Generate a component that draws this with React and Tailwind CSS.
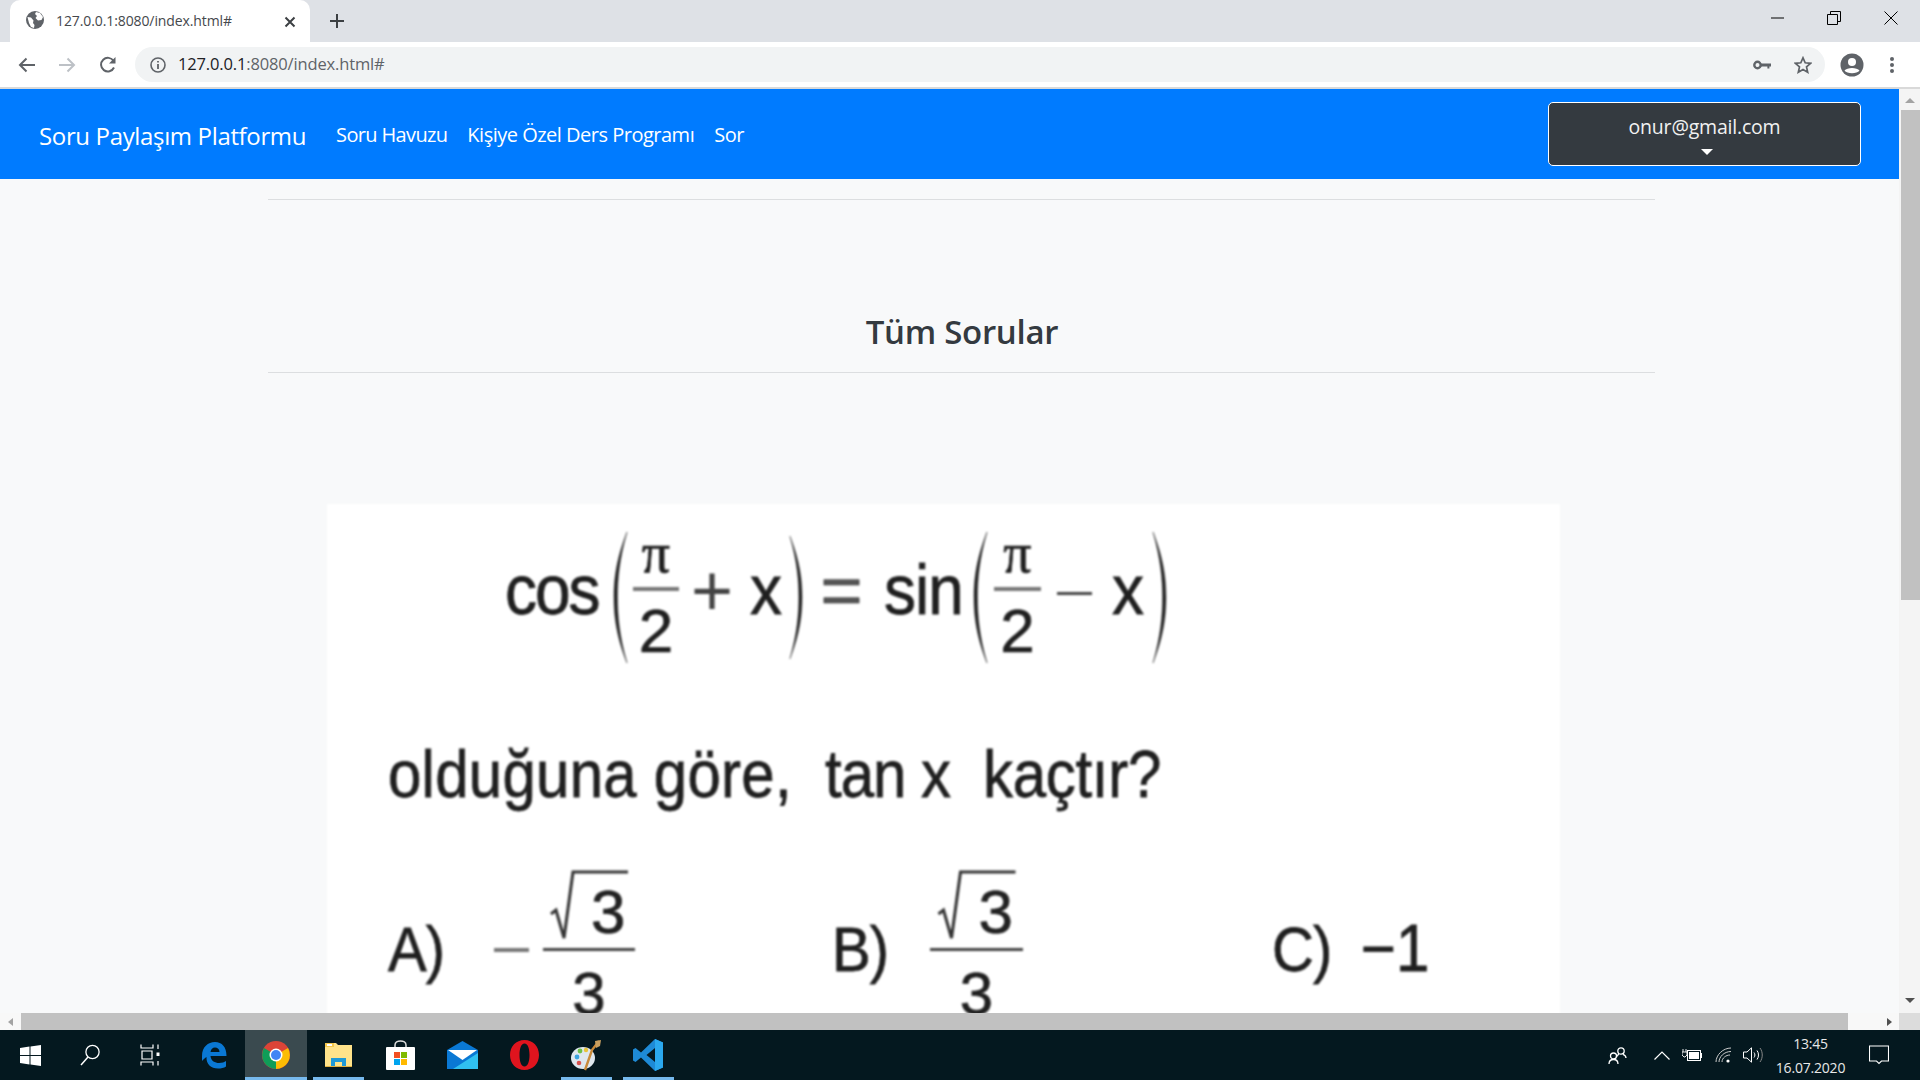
import React from "react";

const ui = { fontFamily: '"Open Sans","Noto Sans",sans-serif' };
const math = { fontFamily: '"Liberation Sans",Arial,sans-serif' };

function Globe() {
  return (
    <svg width="18" height="18" viewBox="0 0 18 18">
      <circle cx="9" cy="9" r="9" fill="#5f6368" />
      <path d="M1.5 6 L5 6.5 L7.5 9.5 L7 12 L8.5 14 L8 17 L5 16 L3 12 Z M10 1 L9 3 L11 5 L9.5 7 L12 9.5 L15.5 9 L17 6 L14 2 Z" fill="#fff" />
    </svg>
  );
}

function Paren({ w, flip }) {
  return (
    <svg width={w} height="135" viewBox="0 0 16 135" className={flip ? "shrink-0 -scale-x-100" : "shrink-0"}>
      <path d="M14 2 C3 30 1 50 1 67 C1 85 3 105 14 133 C6 105 4.5 85 4.5 67 C4.5 50 6 30 14 2 Z" fill="#222" stroke="#222" strokeWidth="0.4" />
    </svg>
  );
}

function Frac({ w }) {
  return (
    <div className="flex flex-col items-center shrink-0">
      <span className="text-[56px] leading-[50px] h-[50px] -mt-[2px]" style={{ fontFamily: '"Liberation Serif",serif' }}>π</span>
      <div className="h-[4px] bg-[#777] mt-[9px]" style={{ width: w }} />
      <span className="text-[62px] leading-[62px] h-[62px] mt-[9px]">2</span>
    </div>
  );
}

function SqrtFrac({ w, numLeft }) {
  return (
    <div className="flex flex-col shrink-0" style={{ width: w }}>
      <svg width={w} height="82" viewBox="0 0 92 82" className="shrink-0 overflow-visible">
        <path d="M8 48 L13 44 L21 72 L30 6 L85 6" fill="none" stroke="#333" strokeWidth="3" />
        <text x={numLeft} y="67" fontSize="62" fill="#222" fontFamily="Liberation Sans" stroke="#222" strokeWidth="0.7">3</text>
      </svg>
      <div className="h-[3px] w-full bg-[#444]" />
      <div className="flex justify-center text-[60px] leading-[60px] mt-[13px]">3</div>
    </div>
  );
}

function QuestionImage() {
  return (
    <div className="ml-[59px] mt-[131px] w-[1233px] h-[720px] bg-white text-[#1f1f1f] blur-[0.8px] shrink-0 [-webkit-text-stroke:0.7px_#222]" style={math}>
      <div className="flex items-start pt-[26px] pl-[178px] h-[161px]">
        <span className="w-[108px] text-[64px] leading-[121px] tracking-[-2px] scale-y-110">cos</span>
        <Paren w={16} />
        <div className="ml-[4px]"><Frac w={46} /></div>
        <span className="ml-[11px] w-[44px] text-center text-[72px] leading-[120px] text-[#444] [-webkit-text-stroke:0px]">+</span>
        <span className="ml-[16px] w-[29px] text-center text-[64px] leading-[121px] scale-y-110">x</span>
        <div className="ml-[9px]"><Paren w={15} flip /></div>
        <span className="ml-[17px] w-[43px] text-center text-[72px] leading-[120px] text-[#555]">=</span>
        <span className="ml-[21px] w-[75px] text-[64px] leading-[121px] tracking-[-1px] scale-y-110">sin</span>
        <div className="ml-[13px]"><Paren w={18} /></div>
        <div className="ml-[4px]"><Frac w={47} /></div>
        <div className="ml-[16px] w-[35px] h-[3px] bg-[#444] mt-[62px]" />
        <span className="ml-[20px] w-[29px] text-center text-[64px] leading-[121px] scale-y-110">x</span>
        <div className="ml-[9px]"><Paren w={18} flip /></div>
      </div>
      <div className="flex items-start mt-[75px] pl-[61px] h-[70px] text-[60px] leading-[70px] whitespace-pre">
        <span className="w-[437px] tracking-[0.25px] scale-y-110 origin-left">olduğuna göre,</span>
        <span className="w-[158px] tracking-[-1px] scale-y-110 origin-left">tan x</span>
        <span className="tracking-[-0.3px] scale-y-110 origin-left">kaçtır?</span>
      </div>
      <div className="flex items-start mt-[56px] pl-[61px] text-[58px]">
        <span className="w-[106px] leading-[110px] mt-[28px] tracking-[-1px] scale-y-110 origin-left">A)</span>
        <div className="w-[35px] h-[4px] bg-[#777] mt-[82px] shrink-0" />
        <div className="ml-[14px]"><SqrtFrac w={92} numLeft={48} /></div>
        <span className="ml-[197px] w-[98px] leading-[110px] mt-[28px] shrink-0 tracking-[-1px] scale-y-110 origin-left">B)</span>
        <SqrtFrac w={93} numLeft={48} />
        <span className="ml-[249px] w-[89px] leading-[110px] mt-[28px] shrink-0 tracking-[-1px] scale-y-110 origin-left">C)</span>
        <span className="leading-[110px] mt-[28px] text-[60px] scale-y-110">−1</span>
      </div>
    </div>
  );
}

function TabStrip() {
  return (
    <div className="h-[42px] bg-[#dee1e6] flex items-end shrink-0 relative">
      <div className="ml-[10px] w-[300px] h-[42px] bg-white rounded-t-[10px] flex items-center pl-[16px] pb-[2px] relative">
        <Globe />
        <span className="ml-[12px] text-[14px] text-[#45484c] tracking-[-0.1px]" style={ui}>127.0.0.1:8080/index.html#</span>
        <svg width="12" height="12" viewBox="0 0 12 12" className="absolute left-[274px] top-[16px]">
          <path d="M1.5 1.5 L10.5 10.5 M10.5 1.5 L1.5 10.5" stroke="#3c4043" strokeWidth="2" />
        </svg>
      </div>
      <svg width="16" height="16" viewBox="0 0 16 16" className="ml-[19px] mb-[13px]">
        <path d="M8 1 V15 M1 8 H15" stroke="#3c4043" strokeWidth="2" />
      </svg>
      <div className="ml-auto flex items-start h-full pt-[11px] pr-[22px]">
        <svg width="14" height="14" viewBox="0 0 14 14"><path d="M0 7 H13" stroke="#000" strokeWidth="1" /></svg>
        <svg width="14" height="14" viewBox="0 0 14 14" className="ml-[42px]"><path d="M.5 3.5 H10.5 V13.5 H.5 Z M3.5 3.5 V.5 H13.5 V10.5 H10.5" fill="none" stroke="#000" strokeWidth="1" /></svg>
        <svg width="14" height="14" viewBox="0 0 14 14" className="ml-[43px]"><path d="M.5 .5 L13.5 13.5 M13.5 .5 L.5 13.5" stroke="#000" strokeWidth="1" /></svg>
      </div>
    </div>
  );
}

function Toolbar() {
  return (
    <div className="h-[47px] bg-white border-b-2 border-[#d9d9d9] flex items-center shrink-0">
      <svg width="18" height="16" viewBox="0 0 18 16" className="ml-[18px]"><path d="M17 8 H2 M8.5 1.5 L2 8 L8.5 14.5" fill="none" stroke="#5f6368" strokeWidth="2" /></svg>
      <svg width="18" height="16" viewBox="0 0 18 16" className="ml-[22px]"><path d="M1 8 H16 M9.5 1.5 L16 8 L9.5 14.5" fill="none" stroke="#bdc1c6" strokeWidth="2" /></svg>
      <svg width="18" height="18" viewBox="0 0 18 18" className="ml-[23px]"><path d="M15 11.5 A6.8 6.8 0 1 1 14.6 5" fill="none" stroke="#5f6368" strokeWidth="2" /><path d="M16.5 1 V7.5 H10 Z" fill="#5f6368" /></svg>
      <div className="ml-[18px] w-[1690px] h-[35px] rounded-full bg-[#f1f3f4] flex items-center pl-[15px]">
        <svg width="16" height="16" viewBox="0 0 16 16"><circle cx="8" cy="8" r="7" fill="none" stroke="#5f6368" strokeWidth="1.6" /><path d="M8 7 V12 M8 4 V5.6" stroke="#5f6368" strokeWidth="1.8" /></svg>
        <span className="ml-[12px] text-[16.5px] tracking-[-0.15px] text-[#5f6368]" style={ui}><span className="text-[#202124]">127.0.0.1</span>:8080/index.html#</span>
        <svg width="18" height="10" viewBox="0 0 18 10" className="ml-auto"><circle cx="4.5" cy="5" r="3.2" fill="none" stroke="#5f6368" strokeWidth="2.4" /><path d="M8 3.6 H18 V6.4 H16.4 V8.6 H14.4 V6.4 H8 Z" fill="#5f6368" /></svg>
        <svg width="18" height="18" viewBox="0 0 18 18" className="ml-[23px] mr-[13px]"><path d="M9 1.8 L11.2 6.8 L16.6 7.3 L12.5 10.9 L13.7 16.2 L9 13.4 L4.3 16.2 L5.5 10.9 L1.4 7.3 L6.8 6.8 Z" fill="none" stroke="#5f6368" strokeWidth="1.7" /></svg>
      </div>
      <svg width="24" height="24" viewBox="0 0 24 24" className="ml-[15px]"><circle cx="12" cy="12" r="11.5" fill="#5f6368" /><circle cx="12" cy="9" r="4" fill="#fff" /><path d="M4.5 17.5 C7 14 17 14 19.5 17.5 C17 21 7 21 4.5 17.5 Z" fill="#fff" /></svg>
      <svg width="6" height="18" viewBox="0 0 6 18" className="ml-[25px]"><circle cx="3" cy="3" r="2" fill="#5f6368" /><circle cx="3" cy="9" r="2" fill="#5f6368" /><circle cx="3" cy="15" r="2" fill="#5f6368" /></svg>
    </div>
  );
}

function Navbar() {
  return (
    <div className="h-[90px] bg-[#007bff] flex items-center shrink-0 text-white pr-[38px]" style={ui}>
      <span className="ml-[39px] text-[24px] tracking-[-0.35px] mt-[3px] whitespace-nowrap">Soru Paylaşım Platformu</span>
      <span className="ml-[30px] mt-[2px] text-[20px] tracking-[-0.65px] whitespace-nowrap">Soru Havuzu</span>
      <span className="ml-[20px] mt-[2px] text-[20px] tracking-[-0.5px] whitespace-nowrap">Kişiye Özel Ders Programı</span>
      <span className="ml-[20px] mt-[2px] text-[20px] tracking-[-0.5px]">Sor</span>
      <div className="ml-auto w-[313px] h-[64px] bg-[#343a40] border border-white rounded-[5px] flex flex-col items-center pt-[10px] text-[#f1f1f1]">
        <span className="text-[19.5px] leading-[28px] tracking-[-0.2px]">onur@gmail.com</span>
        <div className="mt-[8px] ml-[4px] w-0 h-0 border-x-[6px] border-x-transparent border-t-[6px] border-t-white" />
      </div>
    </div>
  );
}

function Page() {
  return (
    <div className="flex-1 min-h-0 overflow-hidden bg-[#f8f9fa] flex flex-col">
      <div className="mt-[20px] ml-[268px] w-[1387px] flex flex-col shrink-0">
        <div className="h-[1px] bg-[#dcdee0]" />
        <div className="h-[172px] pt-[112px] pl-[1px] text-center text-[33px] leading-[40px] font-semibold text-[#343a40] tracking-[-0.3px]" style={ui}>Tüm Sorular</div>
        <div className="h-[1px] bg-[#dcdee0]" />
        <QuestionImage />
      </div>
    </div>
  );
}

function HScroll() {
  return (
    <div className="h-[17px] bg-[#f8f8f8] flex items-center shrink-0">
      <div className="w-[21px] flex justify-center"><div className="w-0 h-0 border-y-[4px] border-y-transparent border-r-[5px] border-r-[#a3a3a3]" /></div>
      <div className="w-[1827px] h-full bg-[#c1c1c1]" />
      <div className="w-[51px] flex justify-end pr-[7px]"><div className="w-0 h-0 border-y-[4px] border-y-transparent border-l-[5px] border-l-[#505050]" /></div>
    </div>
  );
}

function VScroll() {
  return (
    <div className="w-[21px] bg-[#f4f4f4] flex flex-col items-end shrink-0 relative">
      <div className="h-[21px] w-full pt-[2px] flex items-center justify-center"><div className="w-0 h-0 border-x-[5px] border-x-transparent border-b-[5px] border-b-[#a3a3a3]" /></div>
      <div className="w-[19px] h-[490px] bg-[#c1c1c1]" />
      <div className="mt-auto h-[38px] w-full pb-[21px] flex items-center justify-center"><div className="w-0 h-0 border-x-[5px] border-x-transparent border-t-[5px] border-t-[#505050]" /></div>
      <div className="h-[17px] w-full bg-[#dcdcdc] -mt-[17px]" />
    </div>
  );
}

function Slot({ w = 62, active, bar, children }) {
  return (
    <div className={active ? "relative h-full flex items-center justify-center bg-[#3a4a4f]" : "relative h-full flex items-center justify-center"} style={{ width: w }}>
      {children}
      {bar && <div className="absolute bottom-0 left-[6px] right-[5px] h-[3px] bg-[#76b9ed]" />}
      {active && <div className="absolute bottom-0 left-0 right-0 h-[3px] bg-[#76b9ed]" />}
    </div>
  );
}

function Taskbar() {
  return (
    <div className="h-[50px] bg-[#04181f] flex items-center shrink-0 text-[#e8e8e8]" style={ui}>
      <Slot w={60}><svg width="21" height="21" viewBox="0 0 21 21"><path d="M0 3 L9.5 1.6 V10 H0 Z M10.5 1.4 L21 0 V10 H10.5 Z M0 11 H9.5 V19.4 L0 18 Z M10.5 11 H21 V21 L10.5 19.6 Z" fill="#fff" /></svg></Slot>
      <Slot w={60}><svg width="20" height="22" viewBox="0 0 20 22"><circle cx="12.5" cy="8" r="6.6" fill="none" stroke="#fff" strokeWidth="1.3" /><path d="M8 13 L1 21" stroke="#fff" strokeWidth="1.5" /></svg></Slot>
      <Slot w={60}><svg width="20" height="22" viewBox="0 0 20 22" fill="none" stroke="#fff" strokeWidth="1.2"><path d="M1 .5 V4 H13 V.5 M2 7 H12 V15 H2 Z M1 21.5 V18 H13 V21.5 M18 .5 V5 M18 17 V21.5" /><path d="M16.5 8.5 H19.5 V12 H16.5 Z" fill="#fff" stroke="none" /></svg></Slot>
      <div className="w-[3px]" />
      <Slot><svg width="26" height="28" viewBox="0 0 26 28"><path d="M1 15 C1 6 7 1 14 1 C21 1 25.5 6 25.5 15 H9.5 C10 20 14 22 18 22 C21 22 23.5 21 25 20 V25.5 C23 27 20 27.5 17 27.5 C10 27.5 5 23 5.5 16 C4 17 2.5 18 1 20 Z M9.5 11 H18.5 C18.5 8 16.5 6.5 14 6.5 C11.5 6.5 10 8 9.5 11 Z" fill="#0a78d4" fillRule="evenodd" /></svg></Slot>
      <Slot active><svg width="28" height="28" viewBox="0 0 28 28"><circle cx="14" cy="14" r="14" fill="#db4437" /><path d="M14 14 L26 7 A14 14 0 0 1 14 28 Z" fill="#fbbc05" /><path d="M14 14 L14 28 A14 14 0 0 1 2 7 Z" fill="#0f9d58" /><circle cx="14" cy="14" r="6.5" fill="#fff" /><circle cx="14" cy="14" r="5" fill="#4285f4" /></svg></Slot>
      <Slot bar><svg width="27" height="26" viewBox="0 0 27 26"><path d="M0 1 H11 L13 3 H27 V25 H0 Z" fill="#ffe38a" /><path d="M0 1 H9 V5 H0 Z" fill="#f5c84c" /><path d="M2 2 H7 V4 H2 Z" fill="#fff" /><path d="M6 16 H21 V25 H17 V20 H10 V25 H6 Z" fill="#1f9ad6" /><path d="M0 24 H27 V25 H0 Z" fill="#e0b040" /></svg></Slot>
      <Slot><svg width="29" height="30" viewBox="0 0 29 30"><path d="M9 9 V5 C9 -.5 20 -.5 20 5 V9" fill="none" stroke="#ddd" strokeWidth="1.5" /><rect x="0" y="7" width="29" height="23" rx="1" fill="#fff" /><rect x="8" y="12" width="6" height="6" fill="#f25022" /><rect x="15" y="12" width="6" height="6" fill="#7fba00" /><rect x="8" y="19" width="6" height="6" fill="#00a4ef" /><rect x="15" y="19" width="6" height="6" fill="#ffb900" /></svg></Slot>
      <Slot><svg width="31" height="28" viewBox="0 0 31 28"><path d="M15.5 0 L31 9 V28 H0 V9 Z" fill="#0a78d4" /><path d="M1 9 H30 L15.5 19 Z" fill="#fff" /><path d="M31 12 V28 H6 Z" fill="#30c0f0" /></svg></Slot>
      <Slot><svg width="29" height="30" viewBox="0 0 29 30"><path fillRule="evenodd" d="M14.5 0 C23 0 29 6.5 29 15 C29 23.5 23 30 14.5 30 C6 30 0 23.5 0 15 C0 6.5 6 0 14.5 0 Z M14.5 3.5 C11 3.5 9.5 9 9.5 15 C9.5 21 11 26.5 14.5 26.5 C18 26.5 19.5 21 19.5 15 C19.5 9 18 3.5 14.5 3.5 Z" fill="#e0141e" /></svg></Slot>
      <Slot bar><svg width="30" height="31" viewBox="0 0 30 31"><ellipse cx="12" cy="18" rx="12" ry="11" fill="#dfe7ee" /><circle cx="6" cy="17" r="2.4" fill="#3da5e0" /><circle cx="9" cy="11" r="2.4" fill="#6cc04a" /><circle cx="15" cy="10" r="2.2" fill="#e8c33a" /><circle cx="8" cy="23" r="2.3" fill="#d9534f" /><path d="M28 1 L21 10 L14 30" fill="none" stroke="#c98a3a" strokeWidth="2.4" /><path d="M24 1 L30 0 L29 6 L25 8 Z" fill="#c9a060" /></svg></Slot>
      <Slot bar><svg width="30" height="32" viewBox="0 0 30 32"><path d="M22 0 L30 3.5 V28.5 L22 32 L8 18.5 L2.5 23 L0 21.5 V10.5 L2.5 9 L8 13.5 Z M22 9 L13.5 16 L22 23 Z" fill="#1e8ad6" fillRule="evenodd" /><path d="M22 0 L30 3.5 V28.5 L22 32 Z" fill="#2ba8ee" /></svg></Slot>

      <div className="ml-auto flex items-center h-full">
        <svg width="19" height="19" viewBox="0 0 19 19" fill="none" stroke="#fff" strokeWidth="1.3" className="mr-[27px]"><circle cx="13" cy="5" r="3.2" /><path d="M8.5 11 C9 9 10 8.5 11 8.3 M15 8.3 C17 9 18 10 18 12" /><circle cx="5.5" cy="10" r="3" /><path d="M1 18 C1 15 3 13.5 5.5 13.5 C8 13.5 10 15 10 18" /></svg>
        <svg width="16" height="9" viewBox="0 0 16 9" fill="none" stroke="#fff" strokeWidth="1.2" className="mr-[12px]"><path d="M.5 8.5 L8 1 L15.5 8.5" /></svg>
        <svg width="20" height="13" viewBox="0 0 20 13" className="mr-[13px]"><path d="M1 0 V3 M4 0 V3 M0 3 H5 V6 L3 8 H2 L0 6 Z" fill="none" stroke="#fff" strokeWidth=".9" /><rect x="5.5" y="1.5" width="13" height="10" fill="none" stroke="#fff" /><rect x="7" y="3" width="10" height="7" fill="#fff" /><rect x="19" y="4" width="1" height="5" fill="#fff" /></svg>
        <svg width="17" height="16" viewBox="0 0 17 16" fill="none" stroke="#ccc" strokeWidth="1" className="mr-[11px]"><path d="M1 15 C1 8 8 1 16 1 M4 15 C4 10 9 4.5 16 4.5 M7 15 C7 11 11 8 15 8" /><circle cx="13" cy="14" r="1.6" fill="#fff" stroke="none" /></svg>
        <svg width="20" height="16" viewBox="0 0 20 16" fill="none" stroke="#fff" strokeWidth="1" className="mr-[6px]"><path d="M.5 5 H4 L8.5 .8 V15.2 L4 11 H.5 Z M11 5.5 C12.2 7 12.2 9 11 10.5 M14 3.5 C16 6 16 10 14 12.5" /><path d="M17 1 C20 5 20 11 17 15" stroke="#888" /></svg>
        <div className="w-[83px] flex flex-col items-center text-[14px] leading-[24px] tracking-[-0.2px] mt-[1px]">
          <span>13:45</span>
          <span>16.07.2020</span>
        </div>
        <svg width="20" height="20" viewBox="0 0 20 20" fill="none" stroke="#fff" strokeWidth="1.1" className="ml-[17px] mr-[31px]"><path d="M.5 1 H19.5 V16 H12.5 L10 18.5 L7.5 16 H.5 Z" /></svg>
      </div>
    </div>
  );
}

export default function App() {
  return (
    <div className="w-[1920px] h-[1080px] flex flex-col overflow-hidden">
      <TabStrip />
      <Toolbar />
      <div className="flex-1 min-h-0 flex">
        <div className="flex-1 min-w-0 flex flex-col">
          <Navbar />
          <Page />
          <HScroll />
        </div>
        <VScroll />
      </div>
      <Taskbar />
    </div>
  );
}
